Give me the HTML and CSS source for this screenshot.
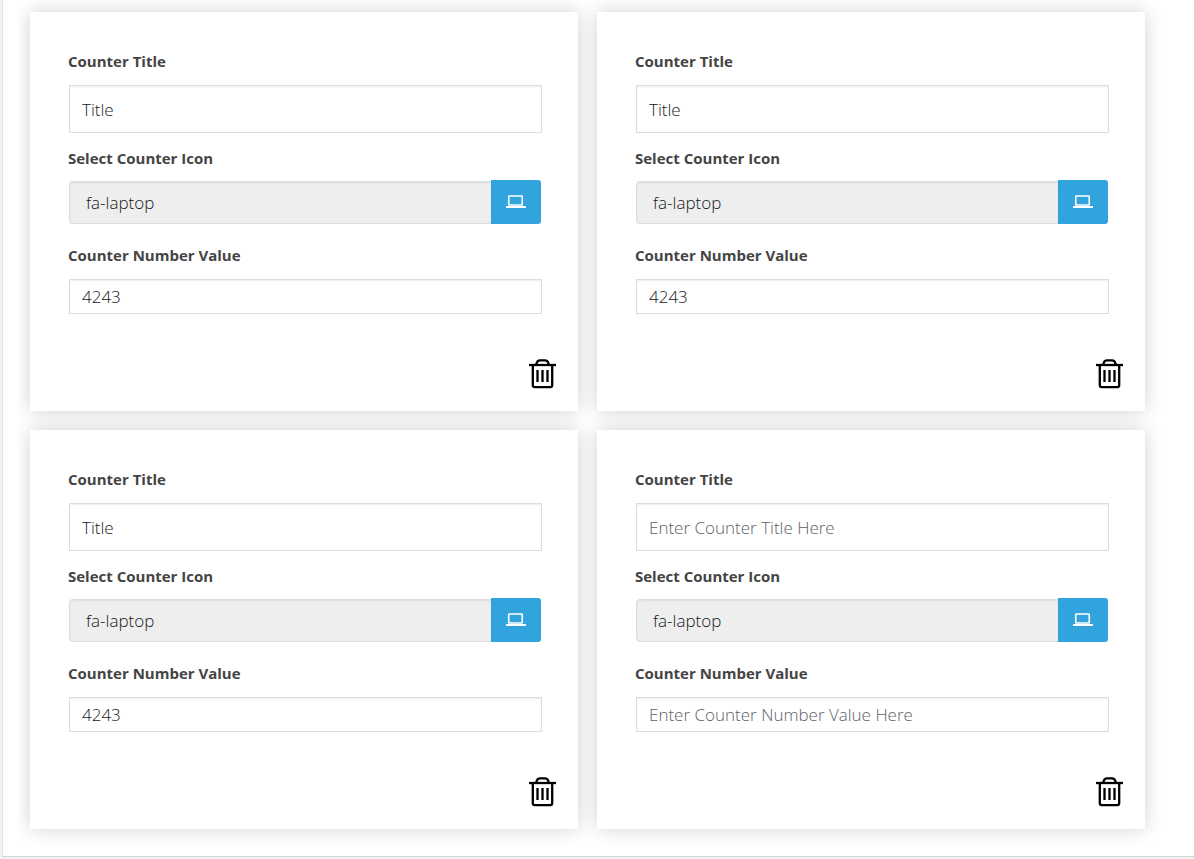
FILE: index.html
```
<!DOCTYPE html>
<html lang="en">
<head>
<meta charset="utf-8">
<meta name="viewport" content="width=device-width, initial-scale=1">
<title>Counters</title>
<link rel="stylesheet" href="styles.css">
</head>
<body>
<svg class="sprite" aria-hidden="true">
  <symbol id="laptop" viewBox="0 0 20 14">
    <rect x="2.75" y="1" width="13.5" height="9" rx=".5" fill="none" stroke="currentColor" stroke-width="1.6"/>
    <rect x="0" y="11" width="20" height="2" rx=".5" fill="currentColor"/>
  </symbol>
  <symbol id="trash" viewBox="0 0 27 30">
    <g fill="none" stroke="currentColor" stroke-width="2.300">
      <path d="M0 6h27"/>
      <path d="M7.500 6V4.500Q8.300 1.300 11 1.300h5Q18.700 1.300 19.500 4.500V6"/>
      <path d="M3.800 6v20.200q0 1.900 1.900 1.900h15.600q1.900 0 1.900-1.900V6"/>
      <path d="M8.500 11v12M13.500 11v12M18.500 11v12"/>
    </g>
  </symbol>
</svg>
<main class="panel">
  <div class="cards">
    <form class="card">
      <label class="label" for="title1">Counter Title</label>
      <input class="input input-title" id="title1" type="text" value="Title" placeholder="Enter Counter Title Here">
      <label class="label" for="icon1">Select Counter Icon</label>
      <div class="picker">
        <input class="input input-icon" id="icon1" type="text" value="fa-laptop" readonly>
        <button class="pick" type="button" aria-label="Choose icon"><svg width="20" height="14"><use href="#laptop"/></svg></button>
      </div>
      <label class="label" for="value1">Counter Number Value</label>
      <input class="input input-value" id="value1" type="text" value="4243" placeholder="Enter Counter Number Value Here">
      <button class="delete" type="button" aria-label="Delete counter"><svg width="27" height="30"><use href="#trash"/></svg></button>
    </form>
    <form class="card">
      <label class="label" for="title2">Counter Title</label>
      <input class="input input-title" id="title2" type="text" value="Title" placeholder="Enter Counter Title Here">
      <label class="label" for="icon2">Select Counter Icon</label>
      <div class="picker">
        <input class="input input-icon" id="icon2" type="text" value="fa-laptop" readonly>
        <button class="pick" type="button" aria-label="Choose icon"><svg width="20" height="14"><use href="#laptop"/></svg></button>
      </div>
      <label class="label" for="value2">Counter Number Value</label>
      <input class="input input-value" id="value2" type="text" value="4243" placeholder="Enter Counter Number Value Here">
      <button class="delete" type="button" aria-label="Delete counter"><svg width="27" height="30"><use href="#trash"/></svg></button>
    </form>
    <form class="card">
      <label class="label" for="title3">Counter Title</label>
      <input class="input input-title" id="title3" type="text" value="Title" placeholder="Enter Counter Title Here">
      <label class="label" for="icon3">Select Counter Icon</label>
      <div class="picker">
        <input class="input input-icon" id="icon3" type="text" value="fa-laptop" readonly>
        <button class="pick" type="button" aria-label="Choose icon"><svg width="20" height="14"><use href="#laptop"/></svg></button>
      </div>
      <label class="label" for="value3">Counter Number Value</label>
      <input class="input input-value" id="value3" type="text" value="4243" placeholder="Enter Counter Number Value Here">
      <button class="delete" type="button" aria-label="Delete counter"><svg width="27" height="30"><use href="#trash"/></svg></button>
    </form>
    <form class="card">
      <label class="label" for="title4">Counter Title</label>
      <input class="input input-title" id="title4" type="text" placeholder="Enter Counter Title Here">
      <label class="label" for="icon4">Select Counter Icon</label>
      <div class="picker">
        <input class="input input-icon" id="icon4" type="text" value="fa-laptop" readonly>
        <button class="pick" type="button" aria-label="Choose icon"><svg width="20" height="14"><use href="#laptop"/></svg></button>
      </div>
      <label class="label" for="value4">Counter Number Value</label>
      <input class="input input-value" id="value4" type="text" placeholder="Enter Counter Number Value Here">
      <button class="delete" type="button" aria-label="Delete counter"><svg width="27" height="30"><use href="#trash"/></svg></button>
    </form>
  </div>
</main>
</body>
</html>
```
FILE: styles.css
```
* { box-sizing: border-box; }

body {
  margin: 0;
  padding: 0 0 2px 2px;
  background: #f1f1f1;
  color: #444;
  font-family: "Segoe UI", "Open Sans", sans-serif;
}

.sprite { display: none; }

svg { display: block; }

.panel {
  padding: 0 0 0 15px;
  background: #fff;
  border-left: 1px solid #e1e1e1;
  border-bottom: 1px solid #d2d2d2;
}

.cards {
  display: grid;
  grid-template-columns: 1fr 1fr;
  gap: 19px;
  padding: 12px 49px 27px 12px;
  overflow: hidden;
}

.card {
  display: flex;
  flex-direction: column;
  padding: 38px 36px 22px 38px;
  background: #fff;
  box-shadow: 0 0 18px rgba(0, 0, 0, .18);
}

.label {
  align-self: flex-start;
  margin-bottom: 2px;
  font-size: 15px;
  font-weight: 700;
  line-height: 22px;
}

.input {
  min-width: 0;
  margin: 0 0 0 1px;
  padding: 0 12px;
  border: 1px solid #ddd;
  border-radius: 0;
  background: #fff;
  box-shadow: inset 0 1px 2px rgba(0, 0, 0, .07);
  color: #16191c;
  font-family: inherit;
  font-size: 17px;
  font-weight: 300;
  outline: 0;
}

.input::placeholder { color: #5c6166; opacity: 1; }

.input-title { height: 48px; margin-top: 11px; margin-bottom: 14px; }

.input-value { height: 35px; margin-top: 11px; }

.picker {
  display: flex;
  align-items: flex-end;
  margin: 9px 1px 20px 0;
}

.input-icon {
  flex: 1;
  height: 43px;
  padding: 0 16px;
  border-right: 0;
  border-radius: 4px 0 0 4px;
  background: #eee;
}

.pick {
  display: flex;
  align-items: center;
  justify-content: center;
  width: 50px;
  height: 44px;
  padding: 0;
  border: 0;
  border-radius: 0 3px 3px 0;
  background: #31a3dd;
  color: #fff;
}

.delete {
  align-self: flex-end;
  margin: 45px -14px 0 0;
  padding: 0;
  border: 0;
  background: none;
  color: #000;
}
```
